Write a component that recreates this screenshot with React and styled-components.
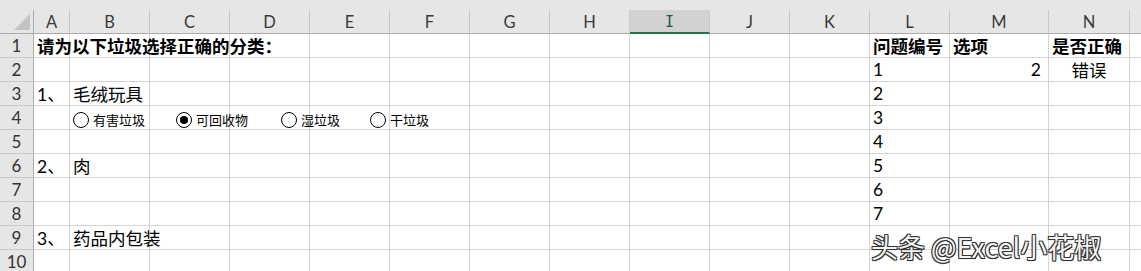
import React from "react";
import styled, { createGlobalStyle } from "styled-components";

const GlobalStyle = createGlobalStyle`
  html, body {
    margin: 0;
    padding: 0;
    background: #fff;
    overflow: hidden;
  }
  body {
    font-family: Lato, "Noto Sans CJK SC", sans-serif;
  }
`;

const COLS = ["A", "B", "C", "D", "E", "F", "G", "H", "I", "J", "K", "L", "M", "N", "O"];
const WIDTHS = [36, 80, 80, 80, 80, 80, 80, 80, 80, 80, 80, 80, 99, 81, 40];
const ROW_COUNT = 10;
const SELECTED_COL = "I";

const Sheet = styled.div`
  position: relative;
  width: 1141px;
  height: 271px;
  overflow: hidden;
  background: #fff;
`;

const Grid = styled.div`
  display: grid;
  grid-template-columns: 34px ${WIDTHS.map((w) => `${w}px`).join(" ")};
  grid-template-rows: 10px 24px repeat(${ROW_COUNT}, 24px);
`;

const TopStrip = styled.div`
  grid-column: 1 / -1;
  background: #e6e6e6;
`;

const Corner = styled.div`
  position: relative;
  background: #e6e6e6;
  border-right: 1px solid #ababab;
  border-bottom: 1px solid #ababab;
  box-sizing: border-box;

  &::after {
    content: "";
    position: absolute;
    right: 3px;
    bottom: 3px;
    width: 0;
    height: 0;
    border-left: 16px solid transparent;
    border-bottom: 16px solid #c3c3c3;
  }
`;

const ColHead = styled.div`
  display: flex;
  align-items: center;
  justify-content: center;
  box-sizing: border-box;
  background: ${(p) => (p.$selected ? "#d2d2d2" : "#e6e6e6")};
  border-right: 1px solid #c9c9c9;
  border-bottom: ${(p) => (p.$selected ? "2px solid #217346" : "1px solid #ababab")};
  color: ${(p) => (p.$selected ? "#1d5b39" : "#3a3a3a")};
  font-family: ${(p) => (p.$selected ? '"DejaVu Sans Mono", monospace' : "Lato, sans-serif")};
  font-size: ${(p) => (p.$selected ? "15px" : "16.5px")};
  padding-top: 1px;
`;

const RowHead = styled.div`
  display: flex;
  align-items: center;
  justify-content: center;
  box-sizing: border-box;
  background: #e6e6e6;
  border-right: 1px solid #ababab;
  border-bottom: 1px solid #c9c9c9;
  color: #333;
  font-family: Lato, sans-serif;
  font-size: 17px;
`;

const Cell = styled.div`
  display: flex;
  align-items: center;
  justify-content: ${(p) =>
    p.$align === "right" ? "flex-end" : p.$align === "center" ? "center" : "flex-start"};
  box-sizing: border-box;
  min-width: 0;
  padding: 0 ${(p) => (p.$align === "right" ? "7px" : "3px")} 0 3px;
  border-right: 1px solid #d4d4d4;
  border-bottom: 1px solid #d4d4d4;
  white-space: nowrap;
  overflow: visible;
  font-family: Lato, "Noto Sans CJK SC", sans-serif;
  font-size: 17.5px;
  font-weight: ${(p) => (p.$bold ? 700 : 400)};
  color: #000;
  position: relative;
  z-index: ${(p) => (p.$over ? 2 : 1)};
`;

const Radio = styled.label`
  position: absolute;
  top: ${(p) => p.$top}px;
  left: ${(p) => p.$left}px;
  display: flex;
  align-items: center;
  gap: 4px;
  font-family: "Noto Sans CJK SC", sans-serif;
  font-size: 13px;
  color: #000;
  z-index: 3;
`;

const Dot = styled.span`
  width: 14px;
  height: 14px;
  border: 1px solid #000;
  border-radius: 50%;
  display: flex;
  align-items: center;
  justify-content: center;
  background: #fff;

  &::after {
    content: "";
    width: 8px;
    height: 8px;
    border-radius: 50%;
    background: ${(p) => (p.$checked ? "#000" : "transparent")};
  }
`;

const Watermark = styled.div`
  position: absolute;
  left: 871px;
  top: 227px;
  font-family: "Noto Sans CJK SC", sans-serif;
  font-size: 27px;
  color: #f4f4f4;
  z-index: 4;
  text-shadow: -1px -1px 0 #333, 1px -1px 0 #333, -1px 1px 0 #333, 1px 1px 0 #222,
    0 1px 1px #444;
`;

const data = {
  "1": {
    A: { text: "请为以下垃圾选择正确的分类：", bold: true, over: true },
    L: { text: "问题编号", bold: true, over: true },
    M: { text: "选项", bold: true },
    N: { text: "是否正确", bold: true },
  },
  "2": { L: { text: "1" }, M: { text: "2", align: "right" }, N: { text: "错误", align: "center" } },
  "3": { A: { text: "1、" }, B: { text: "毛绒玩具" }, L: { text: "2" } },
  "4": { L: { text: "3" } },
  "5": { L: { text: "4" } },
  "6": { A: { text: "2、" }, B: { text: "肉" }, L: { text: "5" } },
  "7": { L: { text: "6" } },
  "8": { L: { text: "7" } },
  "9": { A: { text: "3、" }, B: { text: "药品内包装", over: true } },
  "10": {},
};

const radios = [
  { left: 73, label: "有害垃圾" },
  { left: 176, label: "可回收物", checked: true },
  { left: 281, label: "湿垃圾" },
  { left: 370, label: "干垃圾" },
];

export default function App() {
  const rows = Array.from({ length: ROW_COUNT }, (_, i) => String(i + 1));
  return (
    <Sheet>
      <GlobalStyle />
      <Grid>
        <TopStrip />
        <Corner />
        {COLS.map((c) => (
          <ColHead key={c} $selected={c === SELECTED_COL}>
            {c === "O" ? "" : c}
          </ColHead>
        ))}
        {rows.map((r) => (
          <React.Fragment key={r}>
            <RowHead>{r}</RowHead>
            {COLS.map((c) => {
              const cell = (data[r] || {})[c];
              return (
                <Cell
                  key={c}
                  $bold={cell?.bold}
                  $align={cell?.align}
                  $over={cell?.over}
                >
                  {cell?.text}
                </Cell>
              );
            })}
          </React.Fragment>
        ))}
      </Grid>
      {radios.map((r) => (
        <Radio key={r.label} $left={r.left} $top={110}>
          <Dot $checked={r.checked} />
          {r.label}
        </Radio>
      ))}
      <Watermark>头条 @Excel小花椒</Watermark>
    </Sheet>
  );
}
